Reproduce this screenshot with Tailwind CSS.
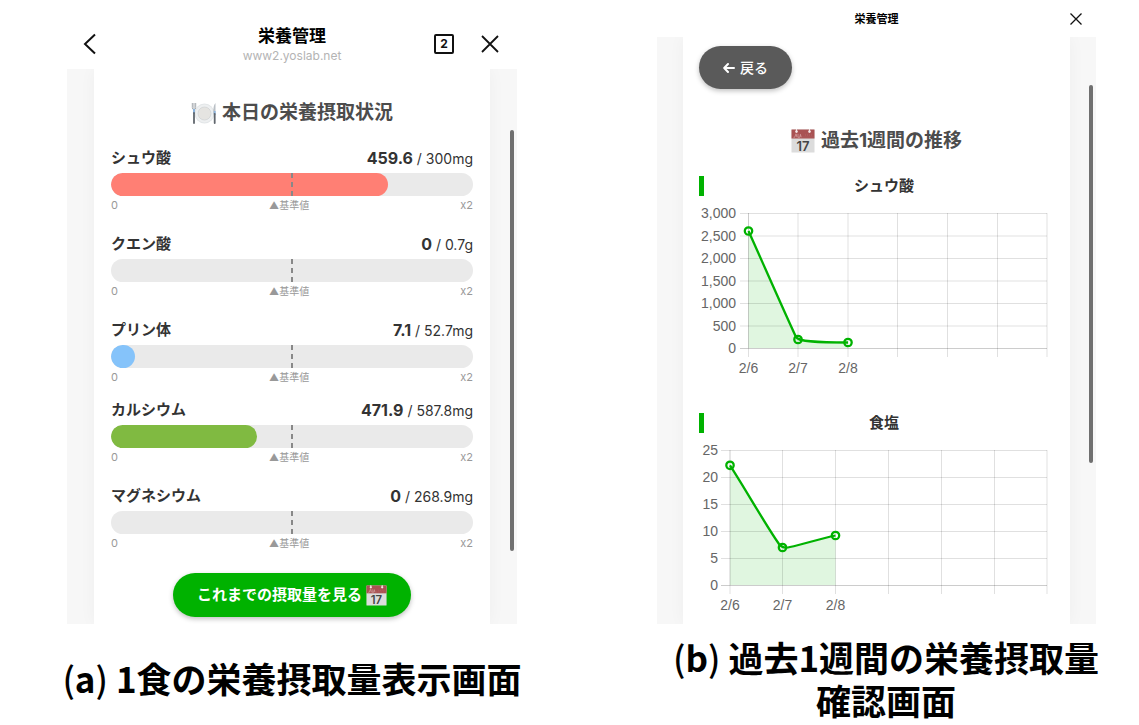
<!DOCTYPE html>
<html lang="ja">
<head>
<meta charset="utf-8">
<meta name="viewport" content="width=device-width, initial-scale=1">
<title>栄養管理</title>
<script src="https://cdn.jsdelivr.net/npm/@tailwindcss/browser@4"></script>
</head>
<body class="bg-white font-[Inter,'Noto_Sans_CJK_JP',sans-serif] text-[#333]">
<svg class="hidden" aria-hidden="true">
  <symbol id="calendar" viewBox="0 0 24 24">
    <rect x="0.5" y="0.5" width="23" height="23" rx="0.6" fill="#dcdcdc"/>
    <path d="M0.5 0.5h23v9h-23z" fill="#a95253"/>
    <path d="M2.500 8.300h1.200l1.300-3.500 1 3.500M7 4.800v3.500h1.800l.6-3 .8 3" fill="none" stroke="#d3a0a0" stroke-width=".8"/>
    <path d="M11.500 8h11M14 6h7" stroke="#bb7475" stroke-width=".6" stroke-dasharray="1 1"/>
    <circle cx="5.500" cy="2.600" r="1.300" fill="#f5e9e9"/><circle cx="18.500" cy="2.600" r="1.300" fill="#f5e9e9"/>
    <path d="M5.500 0v2.500M18.500 0v2.500" stroke="#f5e9e9" stroke-width="1"/>
    <text x="12" y="21.500" text-anchor="middle" font-family="Inter, sans-serif" font-size="13" font-weight="600" fill="#444">17</text>
  </symbol>
</svg>
<main class="flex items-start">

  <figure class="flex-[584] min-w-0">
    <div class="mx-[67px]">
      <header class="relative flex h-[69px] items-center justify-between pt-5 pr-[17px] pb-px pl-4 text-black">
        <button aria-label="戻る"><svg class="h-6 w-4" viewBox="0 0 16 24" fill="none" stroke="#111" stroke-width="2"><path d="M12 2.500L2 12l10 9.500"/></svg></button>
        <div class="absolute inset-x-0 top-6 text-center">
          <h1 class="text-[17px] leading-6 font-bold">栄養管理</h1>
          <p class="text-[12px] leading-4 text-[#b4b4b4]">www2.yoslab.net</p>
        </div>
        <div class="flex items-center gap-[26px]">
          <button aria-label="タブ" class="grid h-5 w-5 place-items-center rounded-[2px] border-2 border-[#111] text-[12px] leading-4 font-bold text-[#111]">2</button>
          <button aria-label="閉じる"><svg class="h-5 w-5" viewBox="0 0 20 20" fill="none" stroke="#111" stroke-width="1.800"><path d="M2 2l16 16M18 2L2 18"/></svg></button>
        </div>
      </header>
      <div class="relative h-[555px] overflow-hidden bg-[#f7f7f7]">
        <section class="mx-[27px] h-full bg-white px-[17px] pt-[30px] shadow-[0_0_16px_rgba(0,0,0,0.04)]">
          <h2 class="flex h-7 items-center justify-center gap-[5px] text-[19px] font-bold text-[#4c4c4c]">
            <svg class="h-[25px] w-[26px]" viewBox="0 0 26 25" aria-hidden="true">
              <circle cx="13.500" cy="12.500" r="10" fill="#e3e6e8"/><circle cx="13.500" cy="12.500" r="9" fill="#eef0f1"/>
              <circle cx="13.500" cy="12.500" r="6.500" fill="#e5e4e1" stroke="#cfd1d2" stroke-width=".7"/>
              <path d="M1.300 2v4.500q0 2 1.700 2.300q1.700-.3 1.700-2.300V2M3 2v8" fill="none" stroke="#9a9fa5" stroke-width=".9"/>
              <path d="M3 8v5" stroke="#8db5de" stroke-width="2"/><path d="M3 12v10" stroke="#60666d" stroke-width="1.800" stroke-linecap="round"/>
              <path d="M24.500 2v11h-2.200Q21.800 5 24.500 2" fill="#b9bfc5"/>
              <path d="M23.700 10v4" stroke="#8db5de" stroke-width="1.800"/><path d="M23.700 13v9" stroke="#60666d" stroke-width="1.800" stroke-linecap="round"/>
            </svg>
            本日の栄養摂取状況
          </h2>
          <div class="mt-[19px]">
            <div class="mb-[18px]">
              <div class="flex h-6 items-center justify-between text-[14px]"><h3 class="text-[15px] font-bold">シュウ酸</h3><p><b class="text-[16px]">459.6</b> / 300mg</p></div>
              <div class="relative mt-[3px] h-[23px] overflow-hidden rounded-full bg-[#eaeaea]"><div class="h-full rounded-full bg-[#ff7f74]" style="width:76.6%"></div><div class="absolute inset-y-0 left-1/2 -ml-px w-[2px] bg-[repeating-linear-gradient(#888_0_5px,transparent_5px_9px)]"></div></div>
              <div class="flex h-[18px] items-center justify-between text-[11px] text-[#999]"><span>0</span><span class="text-[10px]">▲基準値</span><span>x2</span></div>
            </div>
            <div class="mb-[18px]">
              <div class="flex h-6 items-center justify-between text-[14px]"><h3 class="text-[15px] font-bold">クエン酸</h3><p><b class="text-[16px]">0</b> / 0.7g</p></div>
              <div class="relative mt-[3px] h-[23px] overflow-hidden rounded-full bg-[#eaeaea]"><div class="absolute inset-y-0 left-1/2 -ml-px w-[2px] bg-[repeating-linear-gradient(#888_0_5px,transparent_5px_9px)]"></div></div>
              <div class="flex h-[18px] items-center justify-between text-[11px] text-[#999]"><span>0</span><span class="text-[10px]">▲基準値</span><span>x2</span></div>
            </div>
            <div class="mb-3">
              <div class="flex h-6 items-center justify-between text-[14px]"><h3 class="text-[15px] font-bold">プリン体</h3><p><b class="text-[16px]">7.1</b> / 52.7mg</p></div>
              <div class="relative mt-[3px] h-[23px] overflow-hidden rounded-full bg-[#eaeaea]"><div class="h-full rounded-full bg-[#85c3fa]" style="width:6.7%"></div><div class="absolute inset-y-0 left-1/2 -ml-px w-[2px] bg-[repeating-linear-gradient(#888_0_5px,transparent_5px_9px)]"></div></div>
              <div class="flex h-[18px] items-center justify-between text-[11px] text-[#999]"><span>0</span><span class="text-[10px]">▲基準値</span><span>x2</span></div>
            </div>
            <div class="mb-[18px]">
              <div class="flex h-6 items-center justify-between text-[14px]"><h3 class="text-[15px] font-bold">カルシウム</h3><p><b class="text-[16px]">471.9</b> / 587.8mg</p></div>
              <div class="relative mt-[3px] h-[23px] overflow-hidden rounded-full bg-[#eaeaea]"><div class="h-full rounded-full bg-[#80ba41]" style="width:40.2%"></div><div class="absolute inset-y-0 left-1/2 -ml-px w-[2px] bg-[repeating-linear-gradient(#888_0_5px,transparent_5px_9px)]"></div></div>
              <div class="flex h-[18px] items-center justify-between text-[11px] text-[#999]"><span>0</span><span class="text-[10px]">▲基準値</span><span>x2</span></div>
            </div>
            <div>
              <div class="flex h-6 items-center justify-between text-[14px]"><h3 class="text-[15px] font-bold">マグネシウム</h3><p><b class="text-[16px]">0</b> / 268.9mg</p></div>
              <div class="relative mt-[3px] h-[23px] overflow-hidden rounded-full bg-[#eaeaea]"><div class="absolute inset-y-0 left-1/2 -ml-px w-[2px] bg-[repeating-linear-gradient(#888_0_5px,transparent_5px_9px)]"></div></div>
              <div class="flex h-[18px] items-center justify-between text-[11px] text-[#999]"><span>0</span><span class="text-[10px]">▲基準値</span><span>x2</span></div>
            </div>
          </div>
          <button class="mx-auto mt-[21px] flex h-11 items-center gap-1 rounded-full bg-[#00b200] px-6 text-[15px] font-bold whitespace-nowrap text-white shadow-[0_2px_5px_rgba(0,0,0,0.25)]">これまでの摂取量を見る<svg class="h-[21px] w-[21px]" aria-hidden="true"><use href="#calendar"/></svg></button>
        </section>
        <div class="absolute top-[61px] right-[3px] h-[421px] w-1 rounded-full bg-[#707070]"></div>
      </div>
    </div>
    <figcaption class="mt-8 text-center font-['Noto_Sans_CJK_JP',sans-serif] text-[35px] leading-[43px] font-bold text-black"><span class="font-medium">(</span>a<span class="font-medium">)</span> 1食の栄養摂取量表示画面</figcaption>
  </figure>

  <figure class="flex-[555] min-w-0">
    <div class="mr-[43px] ml-[73px]">
      <header class="relative flex h-[37px] items-center justify-end pr-[14px] text-black">
        <h1 class="absolute inset-x-0 text-center text-[11px] leading-4 font-bold">栄養管理</h1>
        <button aria-label="閉じる" class="relative"><svg class="h-3 w-3" viewBox="0 0 12 12" fill="none" stroke="#111" stroke-width="1.300"><path d="M.5 .5l11 11M11.500 .5l-11 11"/></svg></button>
      </header>
      <div class="relative h-[587px] overflow-hidden bg-[#f7f7f7]">
        <section class="mx-[26px] h-full bg-white px-4 pt-[9px] shadow-[0_0_16px_rgba(0,0,0,0.04)]">
          <button class="flex h-[43px] items-center gap-[5px] rounded-full bg-[#5a5a5a] px-6 text-[14px] font-medium whitespace-nowrap text-white shadow-[0_2px_5px_rgba(0,0,0,0.25)]"><svg class="h-3 w-3" viewBox="0 0 12 12" fill="none" stroke="#fff" stroke-width="2" stroke-linecap="round" stroke-linejoin="round" aria-hidden="true"><path d="M11 6H1.300M5 2L1.200 6L5 10"/></svg>戻る</button>
          <h2 class="mt-[38px] flex h-7 items-center justify-center gap-[6px] text-[19px] font-bold text-[#4c4c4c]"><svg class="h-6 w-6" aria-hidden="true"><use href="#calendar"/></svg>過去1週間の推移</h2>

          <h3 class="mt-[21px] h-5 border-l-[5px] border-[#00b200] pl-[10px] text-center text-[15px] leading-5 font-bold">シュウ酸</h3>
          <svg class="mt-1 w-full" viewBox="0 0 355 180" role="img" aria-label="シュウ酸の推移" font-family="'Liberation Sans', Arial, sans-serif" font-size="14">
            <path d="M49.500 31L97 137C99 142 120 142.500 149 142.500V148H49.500z" fill="#00b200" fill-opacity=".12"/>
            <path d="M41 13.500H348M41 36H348M41 58.500H348M41 81H348M41 103.500H348M41 126H348M99 13V157M149 13V157M198.500 13V157M248.500 13V157M298.500 13V157M348 13V157M49.500 148V157" fill="none" stroke="#000" stroke-opacity=".12"/>
            <path d="M41 148.500H348M49.500 13V148" stroke="#000" stroke-opacity=".2"/>
            <path d="M49.500 31C63 61 84 109 97 137C99 142 120 142.500 149 142.500" fill="none" stroke="#00b200" stroke-width="2.300"/>
            <g fill="none" stroke="#00b200" stroke-width="2.300"><circle cx="49.500" cy="31" r="3.700"/><circle cx="99" cy="139.500" r="3.700"/><circle cx="149" cy="142.500" r="3.700"/></g>
            <g fill="#666" text-anchor="end"><text x="37" y="18">3,000</text><text x="37" y="41">2,500</text><text x="37" y="63">2,000</text><text x="37" y="86">1,500</text><text x="37" y="108">1,000</text><text x="37" y="131">500</text><text x="37" y="153">0</text></g>
            <g fill="#666" text-anchor="middle"><text x="49.500" y="173">2/6</text><text x="99" y="173">2/7</text><text x="149" y="173">2/8</text></g>
          </svg>

          <h3 class="mt-[33px] h-5 border-l-[5px] border-[#00b200] pl-[10px] text-center text-[15px] leading-5 font-bold">食塩</h3>
          <svg class="mt-1 w-full" viewBox="0 0 355 180" role="img" aria-label="食塩の推移" font-family="'Liberation Sans', Arial, sans-serif" font-size="14">
            <path d="M31 28.300C47 53 66 87 80 107C83 111 86 111.500 91 110C105 107 120 102 136.500 98.500V148H31z" fill="#00b200" fill-opacity=".12"/>
            <path d="M22 13.500H348M22 40.500H348M22 67.500H348M22 94.500H348M22 121.500H348M83.500 13V157M136.500 13V157M189.500 13V157M242.500 13V157M295.500 13V157M348 13V157M31 148V157" fill="none" stroke="#000" stroke-opacity=".12"/>
            <path d="M22 148.500H348M31 13V148" stroke="#000" stroke-opacity=".2"/>
            <path d="M31 28.300C47 53 66 87 80 107C83 111 86 111.500 91 110C105 107 120 102 136.500 98.500" fill="none" stroke="#00b200" stroke-width="2.300"/>
            <g fill="none" stroke="#00b200" stroke-width="2.300"><circle cx="31" cy="28.300" r="3.700"/><circle cx="83.500" cy="110.500" r="3.700"/><circle cx="136.500" cy="98.500" r="3.700"/></g>
            <g fill="#666" text-anchor="end"><text x="19" y="18">25</text><text x="19" y="45">20</text><text x="19" y="72">15</text><text x="19" y="99">10</text><text x="19" y="126">5</text><text x="19" y="153">0</text></g>
            <g fill="#666" text-anchor="middle"><text x="31" y="173">2/6</text><text x="83.500" y="173">2/7</text><text x="136.500" y="173">2/8</text></g>
          </svg>
        </section>
        <div class="absolute top-12 right-[3px] h-[378px] w-1 rounded-full bg-[#707070]"></div>
      </div>
    </div>
    <figcaption class="mt-[11px] pl-[49px] text-center font-['Noto_Sans_CJK_JP',sans-serif] text-[35px] leading-[43px] font-bold text-black"><span class="font-medium">(</span>b<span class="font-medium">)</span> 過去1週間の栄養摂取量<br>確認画面</figcaption>
  </figure>
</main>
</body>
</html>
